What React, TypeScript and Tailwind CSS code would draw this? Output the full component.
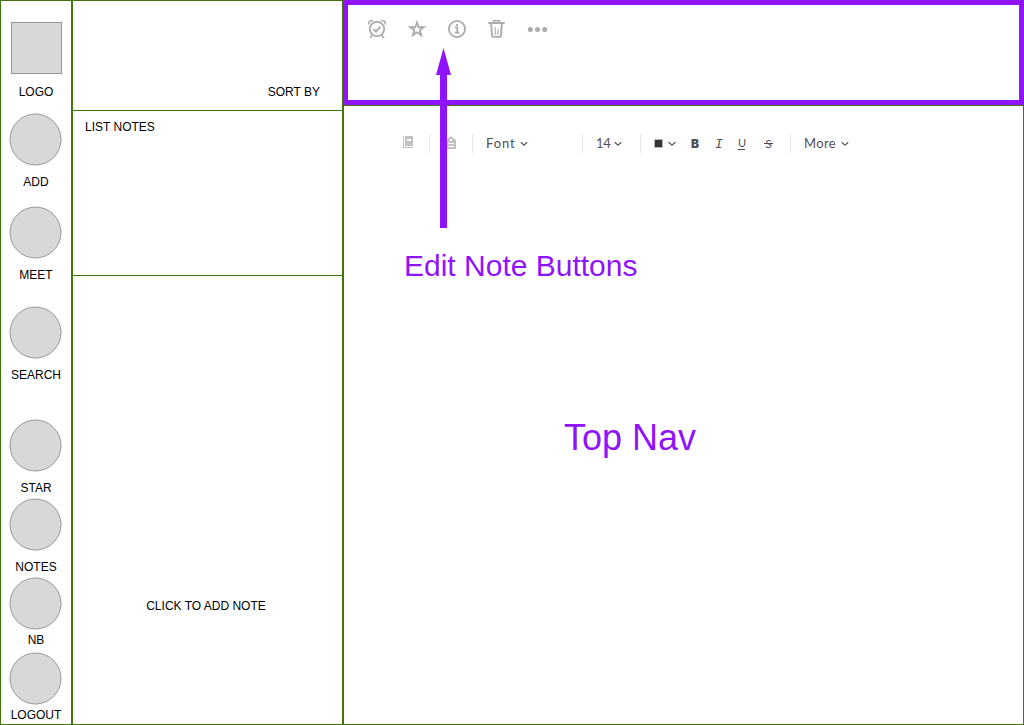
import type { ReactNode } from "react";

const navItems = [
  { label: "ADD", gap: "mt-[14px]", labelGap: "mt-[10px]" },
  { label: "MEET", gap: "mt-[17px]", labelGap: "mt-[10px]" },
  { label: "SEARCH", gap: "mt-[24px]", labelGap: "mt-[10px]" },
  { label: "STAR", gap: "mt-[37px]", labelGap: "mt-[10px]" },
  { label: "NOTES", gap: "mt-[3px]", labelGap: "mt-[10px]" },
  { label: "NB", gap: "mt-[3px]", labelGap: "mt-[4px]" },
  { label: "LOGOUT", gap: "mt-[5px]", labelGap: "mt-[4px]" },
];

function Sidebar() {
  return (
    <nav className="flex w-[72px] shrink-0 flex-col items-center border border-[#417505] pt-[21px]">
      <div className="ml-px h-[52px] w-[51px] border border-[#979797] bg-[#d8d8d8]" />
      <span className="mt-[11px] h-[14px] leading-[14px]">LOGO</span>
      {navItems.map((item) => (
        <div key={item.label} className={`flex flex-col items-center ${item.gap}`}>
          <div className="size-[52px] -translate-x-[0.5px] translate-y-[0.5px] rounded-full border border-[#979797] bg-[#d8d8d8]" />
          <span className={`h-[14px] leading-[14px] ${item.labelGap}`}>{item.label}</span>
        </div>
      ))}
    </nav>
  );
}

function NoteList() {
  return (
    <section className="flex w-[271px] shrink-0 flex-col border border-[#417505]">
      <div className="flex h-[110px] items-end justify-end border-b border-[#417505] pr-[22px] pb-[11px] leading-[14px]">
        SORT BY
      </div>
      <div className="h-[165px] border-b border-[#417505] pt-[9px] pl-[12px] leading-[14px]">
        LIST NOTES
      </div>
      <div className="pt-[323px] pr-[3px] text-center leading-[14px]">CLICK TO ADD NOTE</div>
    </section>
  );
}

function AlarmIcon() {
  return (
    <svg width="20" height="20" viewBox="0 0 20 20" fill="none" stroke="#ababab">
      <circle cx="10" cy="10" r="7.2" strokeWidth="1.8" />
      <path d="m6.5 10.2 2.5 2.4 4.5-4.9" strokeWidth="1.9" />
      <path d="M1.8 5.6V4a2.2 2.2 0 0 1 2.2-2.2h2.2M18.2 5.6V4A2.2 2.2 0 0 0 16 1.8h-2.2" strokeWidth="1.6" />
      <path d="m5.2 15.5-1.2 2.7H2.8M14.8 15.5l1.2 2.7h1.2" strokeWidth="1.6" />
    </svg>
  );
}

function StarIcon() {
  return (
    <svg width="20" height="20" viewBox="0 0 20 20" fill="#ababab">
      <path
        fillRule="evenodd"
        d="m10 .7 2.3 6.6h7l-5.5 4.3 2 6.9-5.8-4-5.8 4 2-6.9L.7 7.3h7zM10 6.1 8.9 9.2H6.2l2.2 1.8-.8 2.9 2.4-1.7 2.4 1.7-.8-2.9 2.2-1.8h-2.7z"
      />
    </svg>
  );
}

function InfoIcon() {
  return (
    <svg width="20" height="20" viewBox="0 0 20 20" fill="none" stroke="#ababab">
      <circle cx="10" cy="10" r="8.1" strokeWidth="1.8" />
      <path d="M8 8.6h2.3v5M7.8 13.7h4.5" strokeWidth="1.7" />
      <path d="M9 5.1h2.1v2H9z" fill="#ababab" stroke="none" />
    </svg>
  );
}

function TrashIcon() {
  return (
    <svg width="20" height="20" viewBox="0 0 20 20" fill="none" stroke="#ababab">
      <path d="M1.3 4h16.4" strokeWidth="2" />
      <path d="M6.4 3V2.3q0-.5.5-.5h5.2q.5 0 .5.5V3" strokeWidth="1.5" />
      <path d="m4.2 5 .8 11.7q.1 1.2 1.2 1.2h6.6q1.1 0 1.2-1.2L14.8 5" strokeWidth="1.9" />
      <path d="M8.1 8l.3 8M11.1 10l-.2 6" strokeWidth="1.1" />
    </svg>
  );
}

function DotsIcon() {
  return (
    <svg width="21" height="20" viewBox="0 0 21 20" fill="#ababab">
      <circle cx="3.4" cy="10.4" r="2.5" />
      <circle cx="10.5" cy="10.4" r="2.5" />
      <circle cx="17.7" cy="10.4" r="2.5" />
    </svg>
  );
}

function Chevron() {
  return (
    <svg className="mt-px shrink-0" width="8" height="6" viewBox="0 0 8 6" fill="none" stroke="#5a5a5a" strokeWidth="1.3">
      <path d="m.8 1.2 3.2 3 3.2-3" />
    </svg>
  );
}

function Group({ className, children }: { className: string; children: ReactNode }) {
  return <div className={`flex h-[19px] shrink-0 items-center ${className}`}>{children}</div>;
}

function FormatBar() {
  return (
    <div className="mt-[28px] flex h-[19px] items-center pl-[58px] font-['Lato',sans-serif] text-[13px] leading-[19px] tracking-[0.35px] text-[#505050]">
      <Group className="w-[27px]">
        <svg className="mb-[3px] ml-px" width="10" height="12" viewBox="0 0 10 12" fill="#c2c2c2">
          <path d="M0 0h1v11h9v1H0z" />
          <path fillRule="evenodd" d="M2 0h8v10H2zM4 3v2h4V3z" />
        </svg>
      </Group>
      <Group className="w-[43px] border-l border-[#e6e6e6]">
        <svg className="mb-[3px] ml-[16px]" width="10" height="13" viewBox="0 0 10 13" fill="#c2c2c2">
          <path fillRule="evenodd" d="m5 0 5 4v9H0V4zM4 3v2h2V3zM2 7v1h6V7zM2 10v1h6v-1z" />
        </svg>
      </Group>
      <Group className="w-[110px] border-l border-[#e6e6e6] pl-[13px]">
        <span className="w-[34px] tracking-[0.9px]">Font</span>
        <Chevron />
      </Group>
      <Group className="w-[58px] border-l border-[#e6e6e6] pl-[13px]">
        <span className="w-[18px] tracking-[-0.4px]">14</span>
        <Chevron />
      </Group>
      <Group className="w-[150px] border-l border-[#e6e6e6] pl-[13px]">
        <span className="mr-[5px] size-[9px] border border-[#b8b8b8] bg-[#333]" />
        <Chevron />
        <span className="ml-[15px] w-[24px] font-['Inter',sans-serif] text-[12px] font-black tracking-normal">B</span>
        <span className="mt-px w-[23px] font-['Liberation_Mono',monospace] text-[13px] italic tracking-normal">I</span>
        <span className="mt-[2px] h-[11px] w-[7px] border-b border-[#4a4a4a] text-center text-[11px] leading-[8px] tracking-normal">U</span>
        <span className="ml-[19px] flex h-[11px] w-[9px] items-center justify-center bg-[linear-gradient(#4a4a4a,#4a4a4a)] bg-[length:9px_1px] bg-center bg-no-repeat text-[12px] tracking-normal">S</span>
      </Group>
      <Group className="border-l border-[#e6e6e6] pl-[13px]">
        <span className="w-[37px]">More</span>
        <Chevron />
      </Group>
    </div>
  );
}

export default function App() {
  return (
    <div className="relative flex h-[725px] w-[1024px] overflow-hidden bg-white font-['Liberation_Sans',Arial,sans-serif] text-[12px] text-black">
      <Sidebar />
      <NoteList />
      <main className="flex min-w-0 flex-1 flex-col border-b border-[#417505]">
        <header className="h-[106px] border-b border-[#417505]">
          <div className="flex h-[105px] items-start gap-[20px] border-[5px] border-[#9013fe] pt-[14px] pl-[19px]">
            <AlarmIcon />
            <StarIcon />
            <InfoIcon />
            <TrashIcon />
            <DotsIcon />
          </div>
        </header>
        <div className="flex-1 border-r border-l border-[#417505] text-[#9013fe]">
          <FormatBar />
          <h2 className="mt-[95px] ml-[60px] text-[30px] leading-[36px]">Edit Note Buttons</h2>
          <h1 className="mt-[132px] ml-[220px] text-[36px] leading-[44px]">Top Nav</h1>
        </div>
      </main>
      <svg className="absolute top-[48px] left-[435px]" width="17" height="180" viewBox="0 0 17 180" fill="#9013fe">
        <path d="M8.5 0 16 27h-4v153H5V27H1z" />
      </svg>
    </div>
  );
}
